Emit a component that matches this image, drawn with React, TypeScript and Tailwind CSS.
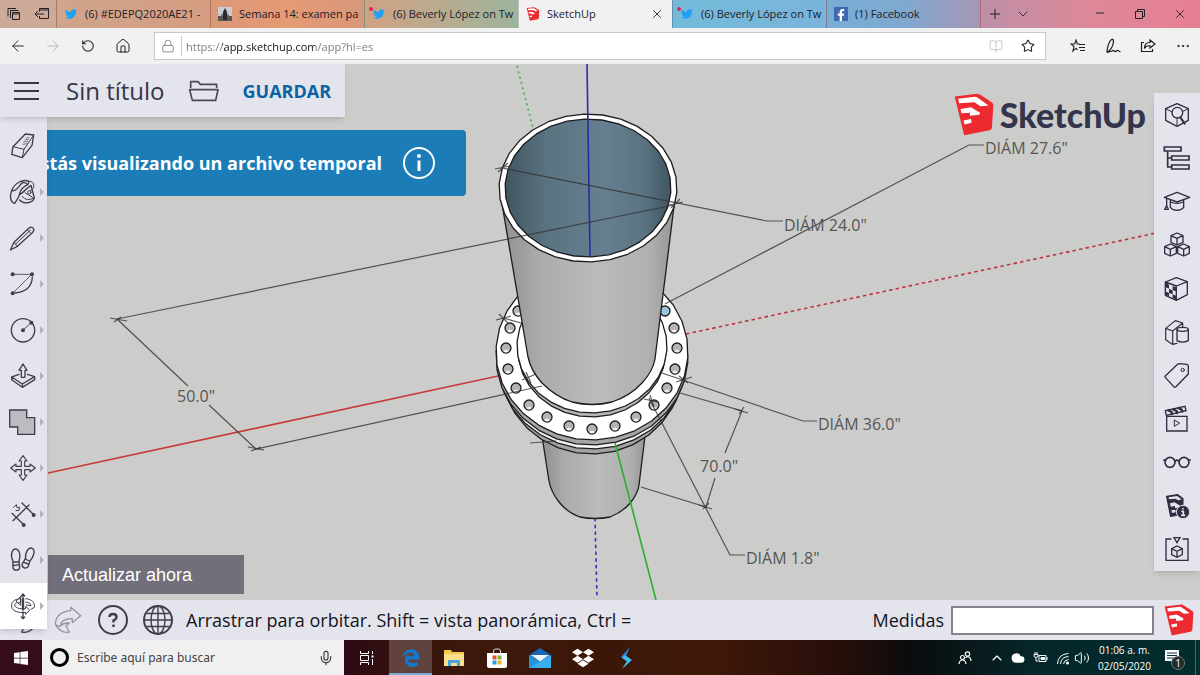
import { useState } from "react";
import type { ReactNode } from "react";
import {
  ArrowLeft,
  ArrowRight,
  BookOpen,
  ChevronDown,
  ChevronUp,
  Cloud,
  Ellipsis,
  House,
  Lock,
  Mic,
  Minus,
  Plus,
  RotateCw,
  Star,
  Volume2,
  X,
} from "lucide-react";
import { FaDropbox, FaEdgeLegacy, FaFacebookF, FaTwitter, FaWindows } from "react-icons/fa";

type Point = [number, number];

type TabInfo = {
  title: string;
  icon: ReactNode;
  tint: string;
  active?: boolean;
};

type Tool = {
  name: string;
  drawing: ReactNode;
  menu?: boolean;
};

function SketchUpMark({ className }: { className: string }) {
  return (
    <svg viewBox="0 0 118 127" className={className} aria-hidden="true">
      <path d="M2 10 L68 2 Q74 2 80 7 L112 28 Q117 32 116 38 L112 102 Q111 108 105 110 L30 125 Z" fill="#ec2a30" />
      <g fill="#fff">
        <path d="M12 17 L62 11 Q66 11 70 14 L102 37 L78 39 L60 27 L15 30 Z" />
        <path d="M19 47 L50 42 L77 58 L75 64 L47 67 L47 58 L22 60 Z" />
        <path d="M28 81 L50 77 L52 88 L31 93 Z" />
      </g>
    </svg>
  );
}

function TwitterIcon({ notified }: { notified?: boolean }) {
  return (
    <span className="relative flex">
      <FaTwitter className="size-3 text-[#1da1f2]" />
      {notified && <span className="absolute -left-1 -top-px size-1 rounded-full bg-[#e0245e]" />}
    </span>
  );
}

const TABS: TabInfo[] = [
  { title: "(6) #EDEPQ2020AE21 -", icon: <TwitterIcon />, tint: "bg-linear-to-r from-[#cfa58c] to-[#d59c80]" },
  {
    title: "Semana 14: examen pa",
    icon: (
      <svg viewBox="0 0 14 14" className="size-3.5">
        <rect width="14" height="14" fill="#c9cdd0" />
        <path d="M0 9h14v5H0z" fill="#5a5654" />
        <path d="M5 13V5l2-4 2 4v8z" fill="#2c2a2e" />
        <path d="M3 8h8" stroke="#2c2a2e" />
      </svg>
    ),
    tint: "bg-linear-to-r from-[#db9877] via-[#e59a74] to-[#d8977a]",
  },
  { title: "(6) Beverly López on Tw", icon: <TwitterIcon notified />, tint: "bg-linear-to-r from-[#cfa283] to-[#9cb49c]" },
  { title: "SketchUp", icon: <SketchUpMark className="size-3.5" />, tint: "bg-[#f1f1f2]", active: true },
  { title: "(6) Beverly López on Tw", icon: <TwitterIcon notified />, tint: "bg-linear-to-r from-[#74bbd9] to-[#79b4db]" },
  {
    title: "(1) Facebook",
    icon: (
      <span className="flex size-3.5 items-end justify-center bg-[#4267b2]">
        <FaFacebookF className="size-3 text-white" />
      </span>
    ),
    tint: "bg-linear-to-r from-[#76aed4] via-[#80a8d0] to-[#a596b6]",
  },
];

function TabBar() {
  return (
    <header className="flex h-7 shrink-0 items-stretch bg-[#dd8898] text-[11px] text-[#20202a]">
      <div className="flex w-14 shrink-0 items-center justify-around bg-[#cdaa98]">
        <button aria-label="Pestañas apartadas">
          <svg viewBox="0 0 14 14" className="size-3.5" fill="none" stroke="#22202a">
            <path d="M1 9.500V1.500h8M3.500 11V3.500h8" />
            <path d="M5.500 5.500h7v7h-7z M5.500 7h7" />
          </svg>
        </button>
        <button aria-label="Apartar pestañas">
          <svg viewBox="0 0 16 14" className="h-3.5 w-4" fill="none" stroke="#22202a">
            <path d="M5.500 4.500V1.500h9v10h-9V9M5.500 3h9M1 7h9M4 4L1 7l3 3" />
          </svg>
        </button>
      </div>
      {TABS.map((tab, i) => (
        <div
          key={i}
          className={`flex w-[154px] min-w-0 items-center border-l border-black/20 pl-1.5 ${tab.active ? "pr-2" : "pr-0.5"} ${tab.tint}`}
        >
          <button className="flex min-w-0 flex-1 items-center gap-1.5 whitespace-nowrap">
            <span className="flex w-4 shrink-0 justify-center">{tab.icon}</span>
            <span>{tab.title}</span>
          </button>
          {tab.active && (
            <button aria-label="Cerrar pestaña">
              <X className="size-3.5" strokeWidth={1.5} />
            </button>
          )}
        </div>
      ))}
      <div className="flex flex-1 items-center border-l border-black/20 bg-linear-to-r from-[#bd8fa8] via-[#dd8898] to-[#e67f92]">
        <button className="flex w-7 justify-center" aria-label="Nueva pestaña">
          <Plus className="size-4" strokeWidth={1.5} />
        </button>
        <button className="flex w-7 justify-center" aria-label="Vista previa">
          <ChevronDown className="size-4" strokeWidth={1.25} />
        </button>
        <div className="ml-auto flex">
          <button className="flex w-10 justify-center" aria-label="Minimizar">
            <Minus className="size-3" strokeWidth={2} />
          </button>
          <button className="flex w-10 items-center justify-center" aria-label="Restaurar">
            <svg viewBox="0 0 10 10" className="size-2.5" fill="none" stroke="#22202a">
              <path d="M.5 2.500h7v7h-7zM2.500 2.500v-2h7v7h-2" />
            </svg>
          </button>
          <button className="flex w-10 justify-center" aria-label="Cerrar">
            <X className="size-3.5" strokeWidth={1.5} />
          </button>
        </div>
      </div>
    </header>
  );
}

function NavButton({ label, children }: { label: string; children: ReactNode }) {
  return (
    <button className="flex w-[35px] items-center justify-center" aria-label={label}>
      {children}
    </button>
  );
}

function AddressBar() {
  const [url, setUrl] = useState("https://app.sketchup.com/app?hl=es");
  return (
    <nav className="flex h-9 shrink-0 items-center justify-between bg-[#f1f1f2] text-[#1d1d22]">
      <div className="flex">
        <NavButton label="Atrás"><ArrowLeft className="size-[18px]" strokeWidth={1.25} /></NavButton>
        <NavButton label="Adelante"><ArrowRight className="size-[18px] text-[#b5b5b8]" strokeWidth={1.25} /></NavButton>
        <NavButton label="Actualizar"><RotateCw className="size-3.5 -scale-x-100" strokeWidth={1.75} /></NavButton>
        <NavButton label="Inicio"><House className="size-4" strokeWidth={1.5} /></NavButton>
      </div>
      <div className="mx-3.5 flex h-7 flex-1 items-center border border-[#c9c9cb] bg-white">
        <Lock className="mx-[6px] size-3.5 text-[#808080]" strokeWidth={1.5} />
        <input
          aria-label="Dirección"
          value={url}
          onChange={(e) => setUrl(e.target.value)}
          className="h-5 min-w-0 flex-1 border-l border-[#c9c9cb] bg-[linear-gradient(90deg,#777_40px,#111_40px,#111_133px,#777_133px)] bg-clip-text pl-1 text-[11px] text-transparent outline-none"
        />
        <button className="px-2" aria-label="Vista de lectura">
          <BookOpen className="size-3.5 text-[#c4c4c4]" strokeWidth={1.5} />
        </button>
        <button className="px-2.5" aria-label="Agregar a favoritos">
          <Star className="size-3.5" strokeWidth={1.75} />
        </button>
      </div>
      <div className="flex">
        <NavButton label="Favoritos">
          <svg viewBox="0 0 16 14" className="h-3.5 w-4" fill="none" stroke="currentColor" strokeWidth="1.1">
            <path d="M9.500 5H7.300L6 1 4.700 5H1l3 2.600L2.900 12 6 9.400l1.600 1.300M9 5.500h6M9 8.500h6M10 11.500h5" />
          </svg>
        </NavButton>
        <NavButton label="Notas">
          <svg viewBox="0 0 16 16" className="size-4" fill="none" stroke="currentColor" strokeWidth="1.2">
            <path d="M2 14.500C2 10 4 3 6.500 1.500S9 5 7 9s-3.500 4-5 5.500l5-1.500c2-2 2.500 2 4.500 0s2 1 4 .5" />
          </svg>
        </NavButton>
        <NavButton label="Compartir">
          <svg viewBox="0 0 16 16" className="size-4" fill="none" stroke="currentColor" strokeWidth="1.2">
            <path d="M4 4.500H1.500v9h11V11M10 2l5 4-5 4V7.800C7 7.500 5.500 8.500 4.500 10.500c0-4 2-6 5.500-6z" />
          </svg>
        </NavButton>
        <NavButton label="Más"><Ellipsis className="size-4" strokeWidth={1.5} /></NavButton>
      </div>
    </nav>
  );
}

// circles are drawn as closed rings of short straight segments
function ring(cx: number, cy: number, rx: number, ry: number) {
  return Array.from({ length: 30 }, (_, i) => {
    const a = ((i + 0.3) / 30) * Math.PI * 2;
    return `${(cx + rx * Math.cos(a)).toFixed(1)},${(cy + ry * Math.sin(a)).toFixed(1)}`;
  }).join(" ");
}

const HOLES: Point[] = [
  [518, 311], [510, 328], [506, 348], [508, 369], [516, 388], [529, 405], [547, 417], [569, 426], [592, 429],
  [615, 426], [636, 417], [654, 405], [667, 388], [675, 369], [677, 348], [674, 328],
];

const LABELS: { x: number; y: number; text: string }[] = [
  { x: 985, y: 154, text: 'DIÁM 27.6"' },
  { x: 784, y: 231, text: 'DIÁM 24.0"' },
  { x: 177, y: 402, text: '50.0"' },
  { x: 818, y: 430, text: 'DIÁM 36.0"' },
  { x: 700, y: 472, text: '70.0"' },
  { x: 746, y: 564, text: 'DIÁM 1.8"' },
];

function Scene() {
  return (
    <svg
      viewBox="0 64 1200 536"
      preserveAspectRatio="xMidYMid slice"
      className="block min-h-0 w-full flex-1 bg-[#cccdca]"
      role="img"
      aria-label="Modelo de tubería con brida"
    >
      <defs>
        <linearGradient id="pipe">
          <stop offset="0" stopColor="#8f8f8f" />
          <stop offset=".22" stopColor="#ababab" />
          <stop offset=".55" stopColor="#bbbbbb" />
          <stop offset=".85" stopColor="#b0b0b0" />
          <stop offset="1" stopColor="#969696" />
        </linearGradient>
        <linearGradient id="bore">
          <stop offset="0" stopColor="#425661" />
          <stop offset=".25" stopColor="#5a7381" />
          <stop offset=".6" stopColor="#668090" />
          <stop offset=".85" stopColor="#587281" />
          <stop offset="1" stopColor="#405460" />
        </linearGradient>
      </defs>

      <g fill="none" strokeWidth="1.6">
        <path d="M48 473L498 376" stroke="#c83a3a" />
        <path d="M686 334L1156 233" stroke="#bf3340" strokeDasharray="3.500 3.200" />
        <path d="M517 66L534 132" stroke="#3fae45" strokeDasharray="2 3.500" />
        <path d="M595 518L597 598" stroke="#3434b8" strokeDasharray="3.500 3.200" />
      </g>

      <g stroke="#1d1d1d" strokeWidth="1.3" strokeLinejoin="round">
        <path d="M542 436L549 481Q551 492 559 502Q568 513 580 517Q595 520 610 517Q623 512 631 502Q638 493 639 485L645 436Z" fill="url(#pipe)" />
        <polygon points={ring(592, 367, 91, 87)} fill="#a2a2a2" />
        <polygon points={ring(592, 362, 94, 87)} fill="#f2f2f2" />
        <polygon points={ring(592, 357, 96, 88)} fill="#a6a6a6" />
        <polygon points={ring(592, 352, 96, 88)} fill="#fff" />
        {HOLES.map(([x, y]) => (
          <g key={`${x}-${y}`}>
            <circle cx={x} cy={y} r="5" fill="#b4b4b4" />
            <path d={`M${x - 3} ${y + 3}q3 -3 6 0q-3 3 -6 0`} fill="#eee" stroke="none" />
          </g>
        ))}
        <circle cx="665" cy="311" r="5" fill="#9cc4dc" />
        <polygon points={ring(592, 350, 74, 67)} fill="#b5b5b5" />
        <polygon points={ring(592, 346, 75, 67)} fill="#fff" />
        <path d="M501 198L528 357Q531 371 542 383Q556 397 572 402Q592 407 612 402Q630 396 642 383Q653 371 655 359L675 198Z" fill="url(#pipe)" />
        <polygon points={ring(588, 188, 89, 74)} fill="#fff" />
        <polygon points={ring(588, 188, 83, 69)} fill="url(#bore)" />
      </g>

      <g fill="none" strokeWidth="1.6">
        <path d="M587 64L590 256" stroke="#2c2ca8" />
        <path d="M615 443L656 600" stroke="#29b02f" />
      </g>

      <g fill="none" stroke="#333" strokeOpacity=".8" strokeWidth="1.2">
        <path d="M502 168L767 221H783M665 304L969 145H984" />
        <path d="M674 205L117 319L188 386M209 405L256 449L542 386" />
        <path d="M503 318L521 323M662 373L803 421H817" />
        <path d="M680 393L742 411L725 453M715 478L706 507L641 487" />
        <path d="M649 398L730 555H745" />
        <path d="M110 318L127 321M114 322L121 317M248 447L264 450M251 451L261 447M495 169L510 166M498 172L508 163M669 205L683 202M671 208L680 199" />
        <path d="M496 320L511 316M499 314L508 323M522 380L536 374M526 372L531 383M676 382L692 377M679 376L688 383M530 443L556 441" />
        <path d="M735 409L748 413M739 414L744 407M699 505L712 509M703 509L709 503M644 399L657 402M650 395L654 407" />
      </g>

      <g className="fill-[#555] text-[16px]">
        {LABELS.map((l) => (
          <text key={l.text} x={l.x} y={l.y}>{l.text}</text>
        ))}
      </g>
    </svg>
  );
}

// every tool drawing lives on an 84-unit square
function ToolDrawing({ children }: { children: ReactNode }) {
  return (
    <svg
      viewBox="0 0 84 84"
      className="size-7 shrink-0"
      fill="none"
      stroke="currentColor"
      strokeWidth="4"
      strokeLinejoin="round"
      strokeLinecap="round"
      aria-hidden="true"
    >
      {children}
    </svg>
  );
}

const DRAW_TOOLS: Tool[] = [
  {
    name: "Borrador",
    drawing: (
      <>
        <path d="M49 6L74 9L69 40L40 77L8 67L12 44Z" />
        <path d="M12 44L45 52L74 9M45 52L40 77" strokeWidth="3" />
        <path d="M42 37l12-2M44 30l12-2M48 24l10-2M52 18l8-1" strokeWidth="2" />
      </>
    ),
  },
  {
    name: "Pintar",
    menu: true,
    drawing: (
      <>
        <path d="M18 76C4 74 1 54 8 38C16 16 40 2 60 10L56 20C40 28 34 36 32 46C32 58 24 62 18 76Z" />
        <path d="M9 38C20 42 30 26 36 18C42 10 50 14 56 20M32 50L66 22L76 60C70 76 44 80 32 66" />
        <path d="M32 50Q44 46 52 32M40 56Q54 72 75 60M60 10C80 8 78 34 64 38M48 44L70 58" strokeWidth="3" />
        <circle cx="61" cy="43" r="5" strokeWidth="3" />
      </>
    ),
  },
  {
    name: "Línea",
    menu: true,
    drawing: (
      <>
        <path d="M4 78L15 55L60 12Q67 6 73 13Q77 19 70 26L25 67Z" />
        <path d="M15 55L25 67M20 60L65 18M55 17l11 11" strokeWidth="3" />
      </>
    ),
  },
  {
    name: "Arco",
    menu: true,
    drawing: (
      <>
        <path d="M11 13H68L11 70" strokeWidth="2.500" />
        <path d="M70 21Q68 64 18 69" />
        <g fill="currentColor" stroke="none">
          <circle cx="11" cy="13" r="6" />
          <circle cx="69" cy="13" r="6" />
          <circle cx="11" cy="70" r="6" />
        </g>
      </>
    ),
  },
  {
    name: "Círculo",
    menu: true,
    drawing: (
      <>
        <circle cx="42" cy="43" r="35" />
        <path d="M42 43L66 20" strokeWidth="3" />
        <circle cx="42" cy="43" r="6" fill="currentColor" stroke="none" />
        <circle cx="67" cy="20" r="6" fill="currentColor" stroke="none" />
      </>
    ),
  },
  {
    name: "Empujar/tirar",
    menu: true,
    drawing: (
      <>
        <path d="M30 37L8 45V53L40 76L77 53V44L55 37M8 45L40 66L77 44M40 66V76" />
        <path d="M42 6L30 25H37V46H48V25H54Z" />
      </>
    ),
  },
  {
    name: "Escala",
    menu: true,
    drawing: <path d="M2 6H53V29H77V79H26V57H2Z" fill="#bbbcc2" strokeLinejoin="miter" />,
  },
  {
    name: "Mover",
    menu: true,
    drawing: (
      <path
        d="M42 5L54 21H47V37H63V30L79 42L63 54V47H47V63H54L42 79L30 63H37V47H21V54L5 42L21 30V37H37V21H30Z"
        strokeWidth="3.500"
      />
    ),
  },
  {
    name: "Dimensiones",
    menu: true,
    drawing: (
      <>
        <path d="M9 40L45 75M39 9L75 45M12 62L60 15" strokeWidth="4" />
        <path d="M14 22l8-8 2 9 8-1-2 9-9 1" strokeWidth="3" />
        <g fill="currentColor" stroke="none">
          <circle cx="44" cy="75" r="6" />
          <circle cx="74" cy="45" r="6" />
        </g>
      </>
    ),
  },
  {
    name: "Caminar",
    menu: true,
    drawing: (
      <>
        <path d="M12 45C2 28 10 8 20 9C32 10 36 30 30 46L32 65C31 75 13 75 12 65Z" />
        <path d="M12 48L30 48M12 59L31 56" />
        <path d="M50 37C48 16 60 3 70 7C80 13 74 34 63 44L58 61C50 72 36 63 40 53Z" />
        <path d="M48 39L62 45M44 49L58 54" />
      </>
    ),
  },
  {
    name: "Orbitar",
    menu: true,
    drawing: (
      <>
        <path d="M42 6V27M37 12l5-6 5 6M42 59V80M37 75l5 5 5-5" />
        <path d="M34 20C14 22 6 30 8 45C10 57 29 64 50 61V67L62 54L50 43V50C31 52 17 47 17 39C17 34 26 31 34 30Z" strokeWidth="3" />
        <path d="M50 20C70 22 78 32 76 46L66 52M50 30C60 31 66 35 66 41L52 39M35 14V40L22 28Z" strokeWidth="3" />
        <path d="M42 22V52" strokeWidth="7" />
      </>
    ),
  },
];

const PANELS: Tool[] = [
  {
    name: "Información de la entidad",
    drawing: (
      <>
        <path d="M42 8L76 23V58L42 76L8 58V23Z" />
        <path d="M8 23L27 33M76 23L60 31M42 52V76" strokeWidth="3" />
        <circle cx="43" cy="35" r="16" />
        <path d="M52 49L65 68" strokeWidth="6" />
      </>
    ),
  },
  {
    name: "Esquema",
    drawing: (
      <g strokeLinejoin="miter" strokeWidth="5">
        <path d="M4 9H54V21H4ZM26 36H78V48H26ZM26 63H78V75H26ZM14 21V69H26M14 42H26" />
      </g>
    ),
  },
  {
    name: "Instructor",
    drawing: (
      <>
        <path d="M4 28L42 13L80 28L42 42Z" />
        <path d="M22 37V58Q28 66 42 67Q56 66 62 58V37M22 42Q42 50 62 42M11 31V53L5 64H16L11 53" />
      </>
    ),
  },
  {
    name: "Componentes",
    drawing: (
      <g>
        <path d="M42 6L60 14V34L42 42L24 34V14ZM24 14L42 22L60 14M42 22V42" />
        <path d="M22 39L40 47V67L22 75L5 67V47ZM5 47L22 55L40 47M22 55V75" />
        <path d="M62 39L79 47V67L62 75L44 67V47ZM44 47L62 55L79 47M62 55V75" />
      </g>
    ),
  },
  {
    name: "Materiales",
    drawing: (
      <>
        <path d="M40 8L73 20V59L40 76L7 61V21ZM7 21L40 33L73 20M40 33V76" />
        <path d="M9 25l9 4v12l-9-4zM29 33l10 4v12l-10-4zM18 42l11 4v12l-11-4zM9 50l9 4v10l-9-4zM29 58l10 4v11l-10-4z" fill="currentColor" stroke="none" />
      </>
    ),
  },
  {
    name: "Estilos",
    drawing: (
      <>
        <path d="M42 76L28 79L8 65V31L37 8L59 15V26M8 31L29 39L59 15M29 39V78" strokeWidth="3.500" />
        <path d="M42 35V68Q58 77 76 68V35" />
        <ellipse cx="59" cy="34" rx="17" ry="6" />
      </>
    ),
  },
  {
    name: "Etiquetas",
    drawing: (
      <>
        <path d="M7 45L42 11Q45 8 50 8L72 10Q76 11 76 16V39L38 78Q35 80 32 77L7 49Q5 47 7 45Z" />
        <circle cx="59" cy="27" r="5" strokeWidth="3" />
      </>
    ),
  },
  {
    name: "Escenas",
    drawing: (
      <g strokeLinejoin="miter">
        <path d="M11 34H72V78H11Z" />
        <path d="M7 17L66 4L69 17L10 31Z" />
        <path d="M16 16l10 5 1 6M31 13l10 5 1 6M46 9l10 5 2 5" strokeWidth="7" />
        <path d="M34 46V64L49 55Z" strokeWidth="3" />
      </g>
    ),
  },
  {
    name: "Visualización",
    drawing: (
      <g strokeWidth="5">
        <circle cx="21" cy="43" r="15" />
        <circle cx="63" cy="43" r="15" />
        <path d="M36 40Q42 33 48 40M2 36H8M76 36H82" />
      </g>
    ),
  },
  {
    name: "Información del modelo",
    drawing: (
      <>
        <path d="M11 13L44 8L60 20L58 66L23 73Z" fill="currentColor" />
        <path d="M16 16L42 12L56 22L46 25L37 20L19 22ZM21 34L35 31L51 41L49 47L36 48V42L23 44ZM25 55l12-2 1 8-11 2z" className="fill-[#e4e4ec]" stroke="none" />
        <circle cx="60" cy="60" r="20" fill="currentColor" className="stroke-[#e4e4ec]" strokeWidth="3" />
        <path d="M60 50v1M57 58h4v12M56 70h9" className="stroke-[#e4e4ec]" strokeWidth="5" />
      </>
    ),
  },
  {
    name: "3D Warehouse",
    drawing: (
      <g strokeLinejoin="miter">
        <path d="M24 12H9V76H75V12H60" />
        <path d="M33 8H51L42 23Z" />
        <path d="M42 33L58 41V59L42 67L26 59V41ZM26 41L42 49L58 41M42 49V67" />
      </g>
    ),
  },
];

function FileBar() {
  return (
    <div className="absolute left-0 top-0 z-20 flex h-[53px] items-center bg-[#e4e4ec] px-3.5 text-[#36354a] shadow-md">
      <button aria-label="Menú">
        <svg viewBox="0 0 26 22" className="h-[22px] w-[26px]" stroke="currentColor" strokeWidth="2">
          <path d="M0 3h25M0 11h25M0 19h25" />
        </svg>
      </button>
      <h1 className="ml-[26px] text-[24px]">Sin título</h1>
      <button className="ml-6" aria-label="Abrir">
        <svg viewBox="0 0 90 66" className="h-[22px] w-[30px]" fill="none" stroke="#4a4a55" strokeWidth="5" strokeLinejoin="round">
          <path d="M5 24V5H27L34 13H83V24M2 29H87L80 61H10Z" />
        </svg>
      </button>
      <button className="ml-6 text-lg font-bold text-[#0a63a3]">GUARDAR</button>
    </div>
  );
}

function DrawToolbar() {
  const [current, setCurrent] = useState("Orbitar");
  return (
    <div className="absolute left-0 top-[53px] z-10 w-[47px] bg-[#e4e4ec] pt-1.5 text-[#3f3f4b] shadow-md">
      {DRAW_TOOLS.map((tool) => (
        <button
          key={tool.name}
          aria-label={tool.name}
          onClick={() => setCurrent(tool.name)}
          className={`flex h-[46px] w-full items-center pb-px pl-[9px] ${tool.name === current ? "bg-white" : ""}`}
        >
          <ToolDrawing>{tool.drawing}</ToolDrawing>
          {tool.menu && (
            <svg viewBox="0 0 4 8" className="ml-[3px] h-2 w-1 fill-[#b4b4bb]">
              <path d="M0 0L4 4L0 8Z" />
            </svg>
          )}
        </button>
      ))}
    </div>
  );
}

function PanelToolbar() {
  return (
    <div className="absolute right-0 top-[29px] z-10 flex h-[478px] w-[46px] flex-col bg-[#e4e4ec] text-[#2f2e42] shadow-md">
      {PANELS.map((panel) => (
        <button key={panel.name} aria-label={panel.name} className="flex flex-1 items-center justify-center">
          <ToolDrawing>{panel.drawing}</ToolDrawing>
        </button>
      ))}
    </div>
  );
}

function TemporaryFileBanner() {
  return (
    <div className="absolute left-0 top-[66px] flex h-[66px] w-[466px] items-center justify-end gap-5 overflow-hidden rounded-r-sm bg-[#1b7cb8] pr-[30px] text-white">
      <p className="whitespace-nowrap text-lg font-bold">Estás visualizando un archivo temporal</p>
      <svg viewBox="0 0 34 34" className="size-[34px] shrink-0" fill="none" stroke="currentColor" strokeWidth="2">
        <circle cx="17" cy="17" r="15" />
        <path d="M17 14.500V25" strokeWidth="3" />
        <circle cx="17" cy="10" r="2" fill="currentColor" stroke="none" />
      </svg>
    </div>
  );
}

function StatusBar() {
  return (
    <footer className="flex h-10 shrink-0 items-center bg-[#e4e4ec] text-lg text-[#14141c]">
      <button className="flex w-[45px] justify-center" aria-label="Deshacer">
        <svg viewBox="0 0 84 84" className="size-7 -scale-x-100" fill="none" stroke="#44444f" strokeWidth="4" strokeLinejoin="round">
          <path d="M50 3L80 29L55 50V38Q20 38 20 60M50 3V14Q8 18 4 52Q6 62 20 60Q28 50 46 51L36 60L46 78Q22 84 4 56" />
        </svg>
      </button>
      <button className="flex w-[45px] justify-center" aria-label="Rehacer">
        <svg viewBox="0 0 84 84" className="size-7" fill="none" stroke="#96969e" strokeWidth="4" strokeLinejoin="round">
          <path d="M50 3L80 29L55 50V38Q20 38 20 60M50 3V14Q8 18 4 52Q6 62 20 60Q28 50 46 51L36 60L46 78Q22 84 4 56" />
        </svg>
      </button>
      <button className="flex w-[45px] justify-center" aria-label="Ayuda">
        <svg viewBox="0 0 30 30" className="size-[30px]" fill="none" stroke="#3f3f4b" strokeWidth="2">
          <circle cx="15" cy="15" r="14" />
          <path d="M11.500 12Q11.500 9 15 9Q18.500 9 18.500 12Q18.500 14 15.500 15.500V17.500M15.500 19.500V22" strokeWidth="2.400" />
        </svg>
      </button>
      <button className="flex w-[45px] justify-center" aria-label="Idioma">
        <svg viewBox="0 0 30 30" className="size-[30px]" fill="none" stroke="#3f3f4b" strokeWidth="1.400">
          <circle cx="15" cy="15" r="14" strokeWidth="2" />
          <ellipse cx="15" cy="15" rx="7" ry="14" />
          <path d="M15 1V29M1 15H29M3.500 8.500H26.500M3.500 21.500H26.500" />
        </svg>
      </button>
      <p className="ml-1.5 flex-1 whitespace-nowrap">Arrastrar para orbitar. Shift = vista panorámica, Ctrl =</p>
      <label htmlFor="medidas">Medidas</label>
      <input id="medidas" className="ml-[7px] h-[29px] w-[203px] border-2 border-[#83838a] bg-white px-2 text-base outline-none" />
      <SketchUpMark className="ml-2.5 mr-1.5 h-8 w-[30px]" />
    </footer>
  );
}

function Workspace() {
  return (
    <main className="relative flex min-h-0 flex-1 flex-col">
      <Scene />
      <StatusBar />
      <TemporaryFileBanner />
      <FileBar />
      <DrawToolbar />
      <div className="absolute right-[54px] top-[29px] flex items-center gap-1.5">
        <SketchUpMark className="h-[43px] w-10" />
        <span className="font-['Lato',sans-serif] text-[34px] font-black leading-[43px] text-[#34344c]">SketchUp</span>
      </div>
      <PanelToolbar />
      <button className="absolute bottom-[46px] left-12 h-[39px] w-[196px] bg-[#716f79] pl-3.5 text-left font-['Liberation_Sans',sans-serif] text-lg text-white">
        Actualizar ahora
      </button>
    </main>
  );
}

function AppIcon({ label, active, children }: { label: string; active?: boolean; children: ReactNode }) {
  return (
    <button
      aria-label={label}
      className={`flex w-[43px] items-center justify-center ${active ? "border-b-2 border-[#76a9d8] bg-[#60433c] pt-0.5" : ""}`}
    >
      {children}
    </button>
  );
}

function Taskbar() {
  return (
    <div className="flex h-[35px] shrink-0 items-stretch bg-[linear-gradient(90deg,#360d1b_0%,#2e0b12_30%,#3a180a_38%,#3e1708_60%,#260e0a_70%,#0b0c0d_76%,#05262a_86%,#022d2f_100%)] text-white">
      <button className="flex w-[42px] items-center justify-center" aria-label="Inicio">
        <FaWindows className="size-4" />
      </button>
      <label className="flex w-[302px] items-center bg-[#f0f0f0] pl-2 pr-2.5 text-[#3c3c3c]">
        <span className="size-[19px] shrink-0 rounded-full border-3 border-black" />
        <input
          aria-label="Buscar"
          placeholder="Escribe aquí para buscar"
          className="ml-2 min-w-0 flex-1 bg-transparent font-['Noto_Sans',sans-serif] text-xs outline-none placeholder:text-[#444]"
        />
        <Mic className="size-4" strokeWidth={1.75} />
      </label>
      <button className="flex w-[45px] items-center justify-center" aria-label="Vista de tareas">
        <svg viewBox="0 0 16 14" className="h-3.5 w-4" fill="none" stroke="currentColor">
          <path d="M1.500 0V2.500h8V0M1.500 4.500h8v5h-8zM1.500 14v-2.500h8V14M13.500 0v3M13.500 8v6" />
          <path d="M12.500 4.500h2v2h-2z" fill="currentColor" stroke="none" />
        </svg>
      </button>
      <AppIcon label="Microsoft Edge" active>
        <FaEdgeLegacy className="size-[18px] text-[#0f79d6]" />
      </AppIcon>
      <AppIcon label="Explorador de archivos">
        <svg viewBox="0 0 20 18" className="h-[18px] w-5">
          <path d="M0 1h7l1 2h12v14H0z" fill="#f5c84c" />
          <path d="M0 5h20v12H0z" fill="#fbe08c" />
          <path d="M4 17v-6h12v6h-3v-3H7v3z" fill="#4aa3dc" />
        </svg>
      </AppIcon>
      <AppIcon label="Microsoft Store">
        <svg viewBox="0 0 20 20" className="size-5">
          <path d="M6.500 5V3Q6.500 1 8.500 1h3q2 0 2 2v2" fill="none" stroke="#ddd" />
          <path d="M0 5h20v13q0 2-2 2H2q-2 0-2-2z" fill="#fff" />
          <path d="M5.500 7.500h4v4h-4z" fill="#e8502c" />
          <path d="M10.500 7.500h4v4h-4z" fill="#7db72f" />
          <path d="M5.500 12.500h4v4h-4z" fill="#2a9fe0" />
          <path d="M10.500 12.500h4v4h-4z" fill="#f4b51c" />
        </svg>
      </AppIcon>
      <AppIcon label="Correo">
        <svg viewBox="0 0 22 20" className="h-5 w-[22px]">
          <path d="M0 7L11 0L22 7V20H0Z" fill="#1466b8" />
          <path d="M0 7L11 14L22 7V20H0Z" fill="#2493dc" />
          <path d="M0 20L22 7V20Z" fill="#37aeee" />
          <path d="M2 7h18l-9 6.500z" fill="#f0f6fb" />
        </svg>
      </AppIcon>
      <AppIcon label="Dropbox">
        <FaDropbox className="size-[22px]" />
      </AppIcon>
      <AppIcon label="Destello">
        <svg viewBox="0 0 14 22" className="h-[22px] w-3.5">
          <path d="M11 0L2 10L9 15L11 12L7 9Z" fill="#2c83e0" />
          <path d="M3 22L13 13L6 8L3 11L8 14Z" fill="#43bbf5" />
        </svg>
      </AppIcon>
      <div className="ml-auto flex items-center">
        <button className="mr-3 flex w-6 justify-center" aria-label="Contactos">
          <svg viewBox="0 0 14 14" className="size-3.5" fill="none" stroke="currentColor" strokeWidth="1.200">
            <circle cx="4.500" cy="6.500" r="2" />
            <circle cx="9.500" cy="3" r="2.200" />
            <path d="M1 13Q1.500 9 4.500 9T8 13M7.500 7Q9 5 11 6Q13 7 13 10" />
          </svg>
        </button>
        <button aria-label="Iconos ocultos"><ChevronUp className="size-4" strokeWidth={1.75} /></button>
        <button className="ml-1.5" aria-label="OneDrive"><Cloud className="size-3.5 fill-white" /></button>
        <button className="ml-2" aria-label="Batería">
          <svg viewBox="0 0 15 12" className="h-3 w-[15px]" fill="none" stroke="currentColor">
            <path d="M6 3.500h7v6H6zM14 5v3M1 2.500h4v2q-2 2-4 0zM2 0v2M4 0v2M3 6v3h2" />
            <path d="M8 5.500h3.500v2H8z" fill="currentColor" />
          </svg>
        </button>
        <button className="ml-2" aria-label="Red">
          <svg viewBox="0 0 14 14" className="size-3.5" fill="none" stroke="currentColor">
            <path d="M1.500 13Q2 3 12.500 2.500M4.500 13Q5 6 12.500 5.500M7.500 13Q8 9 12.500 8.500" />
            <circle cx="11.500" cy="12" r="1.500" fill="currentColor" stroke="none" />
          </svg>
        </button>
        <button className="ml-1" aria-label="Volumen"><Volume2 className="size-4" strokeWidth={1.5} /></button>
        <div className="ml-2 text-center text-[10px] leading-4">
          <p>01:06 a. m.</p>
          <p>02/05/2020</p>
        </div>
        <button className="relative ml-3.5 mr-4" aria-label="Notificaciones">
          <svg viewBox="0 0 14 15" className="h-[15px] w-3.5">
            <path d="M0 0h14v11H9v3.500L5.500 11H0z" fill="#fff" />
            <path d="M2 3h10M2 5.500h10M2 8h7" stroke="#0a3134" />
          </svg>
          <span className="absolute left-1.5 top-1.5 flex size-3.5 items-center justify-center rounded-full border border-[#777] bg-[#222b2e] text-[10px]">1</span>
        </button>
        <span className="mr-1 h-[35px] border-l border-[#4d6668]" />
      </div>
    </div>
  );
}

export default function App() {
  return (
    <div className="flex h-screen flex-col overflow-hidden font-['Open_Sans','Noto_Sans',sans-serif]">
      <TabBar />
      <AddressBar />
      <Workspace />
      <Taskbar />
    </div>
  );
}
